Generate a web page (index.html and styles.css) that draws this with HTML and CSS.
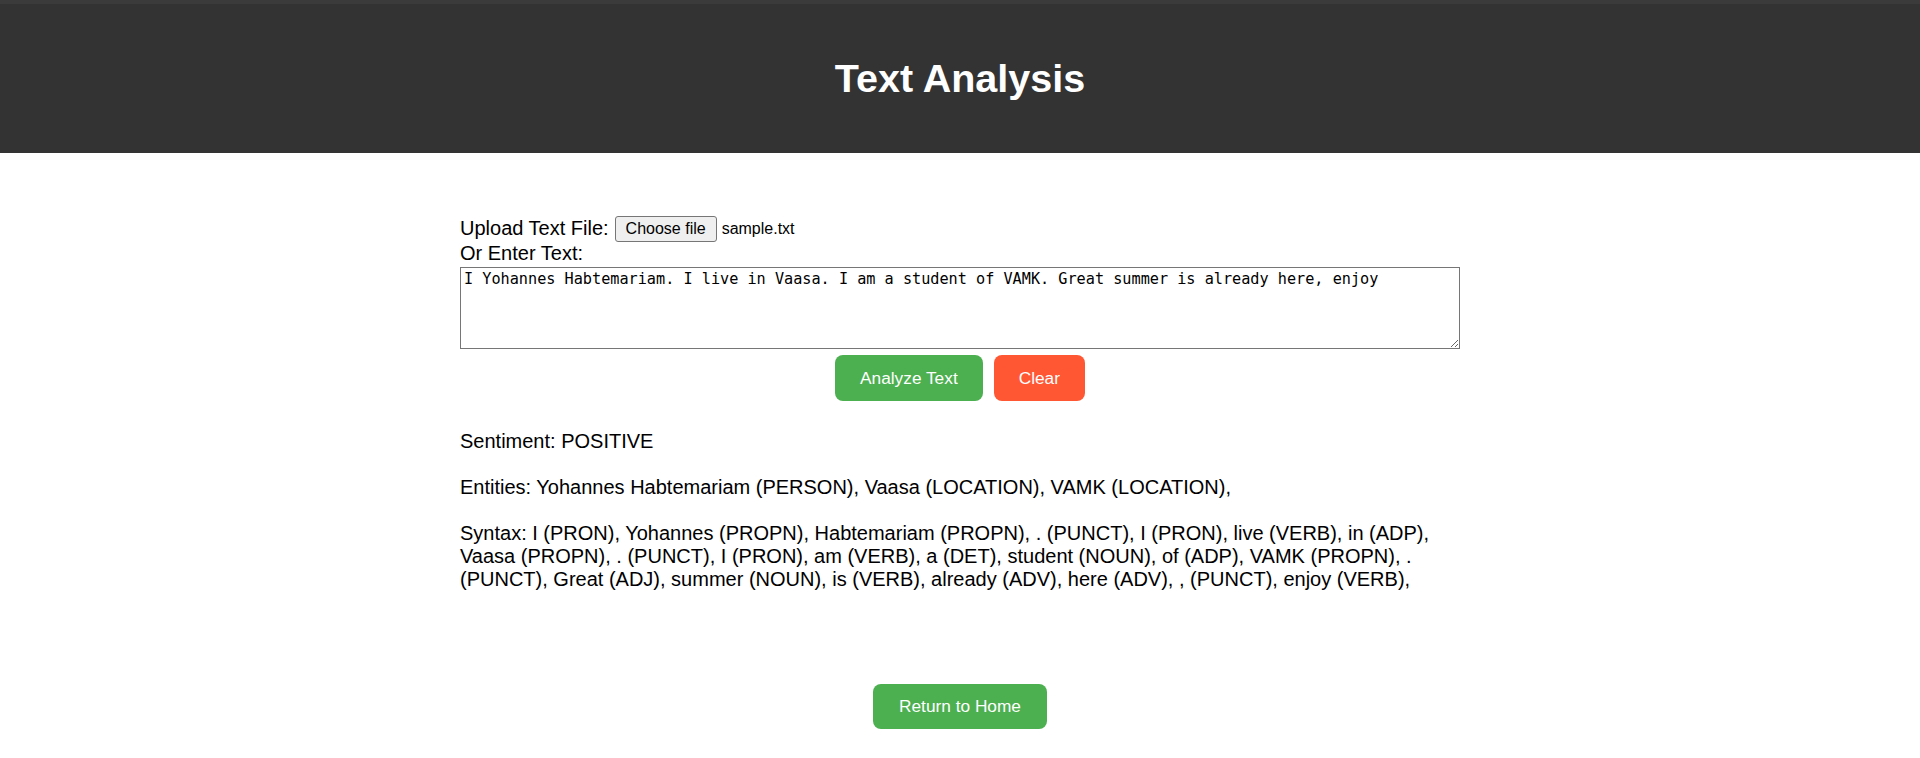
FILE: index.html
```html
<!DOCTYPE html>
<html lang="en">
<head>
<meta charset="utf-8">
<title>Text Analysis</title>
<link rel="stylesheet" href="styles.css">
</head>
<body>
<header class="site-header">
  <h1 class="site-title">Text Analysis</h1>
</header>
<main class="container">
  <form class="analyze-form">
    <div class="upload-row">
      <span class="field-label">Upload Text File:</span>
      <span class="file-btn">Choose file</span>
      <span class="file-name">sample.txt</span>
    </div>
    <label class="field-label block" for="text">Or Enter Text:</label>
    <textarea id="text" class="text-input">I Yohannes Habtemariam. I live in Vaasa. I am a student of VAMK. Great summer is already here, enjoy</textarea>
    <div class="actions">
      <button type="button" class="btn btn-green">Analyze Text</button>
      <button type="button" class="btn btn-red">Clear</button>
    </div>
  </form>
  <div class="results">Sentiment: POSITIVE<br><br>Entities: Yohannes Habtemariam (PERSON), Vaasa (LOCATION), VAMK (LOCATION),<br><br>Syntax: I (PRON), Yohannes (PROPN), Habtemariam (PROPN), . (PUNCT), I (PRON), live (VERB), in (ADP), Vaasa (PROPN), . (PUNCT), I (PRON), am (VERB), a (DET), student (NOUN), of (ADP), VAMK (PROPN), . (PUNCT), Great (ADJ), summer (NOUN), is (VERB), already (ADV), here (ADV), , (PUNCT), enjoy (VERB),</div>
  <div class="home-row">
    <a class="btn btn-green btn-home" href="#">Return to Home</a>
  </div>
</main>
</body>
</html>
```
FILE: styles.css
```css
html, body {
  margin: 0;
  padding: 0;
  background: #fff;
}
body {
  font-family: "Liberation Sans", Arial, sans-serif;
  color: #000;
}
.site-header {
  background: #333;
  border-top: 4px solid #3b3b3b;
  height: 149px;
  display: flex;
  align-items: center;
  justify-content: center;
}
.site-title {
  margin: 0;
  color: #fff;
  font-size: 39.5px;
  font-weight: bold;
}
.container {
  width: 1000px;
  margin: 0 auto;
  padding-top: 62px;
}
.upload-row {
  display: flex;
  align-items: center;
  height: 27px;
}
.field-label {
  font-size: 20px;
  line-height: 23px;
}
.field-label.block {
  display: block;
}
.file-btn {
  font-size: 16px;
  line-height: 18px;
  padding: 3px 10px;
  margin-left: 6px;
  border: 1px solid #767676;
  border-radius: 3px;
  background: #efefef;
  color: #000;
}
.file-name {
  font-size: 16px;
  margin-left: 5px;
}
.text-input {
  display: block;
  box-sizing: border-box;
  width: 1000px;
  height: 82px;
  margin: 2px 0 0;
  padding: 2px 3px;
  border: 1px solid #767676;
  border-radius: 0;
  font-family: "DejaVu Sans Mono", monospace;
  font-size: 15.2px;
  color: #000;
}
.actions {
  display: flex;
  justify-content: center;
  gap: 11px;
  margin-top: 6px;
}
.btn {
  display: inline-flex;
  align-items: center;
  justify-content: center;
  box-sizing: border-box;
  height: 46px;
  padding: 0 25px;
  border: none;
  border-radius: 8px;
  color: #fff;
  font-family: "Liberation Sans", Arial, sans-serif;
  font-size: 17.3px;
  text-decoration: none;
  cursor: pointer;
}
.btn-green {
  background: #4caf50;
}
.btn-red {
  background: #ff5733;
}
.results {
  margin-top: 29px;
  font-size: 20px;
  line-height: 23px;
}
.home-row {
  display: flex;
  justify-content: center;
  margin-top: 93px;
}
.btn-home {
  height: 45px;
  padding: 0 26px;
}
```
